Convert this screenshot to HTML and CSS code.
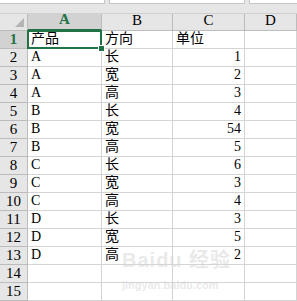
FILE: index.html
```html
<!DOCTYPE html>
<html lang="zh-CN">
<head>
    <meta charset="utf-8">
    <title>Sheet1</title>
    <link rel="stylesheet" href="styles.css">
</head>
<body>
    <div class="toolbar">
        <div class="box box-name"></div>
        <div class="box box-formula"></div>
        <div class="box box-end"></div>
    </div>
    <div class="sheet">
        <div class="corner"><span class="tri"></span></div>
        <div class="colhead active">A</div>
        <div class="colhead">B</div>
        <div class="colhead">C</div>
        <div class="colhead">D</div>

        <div class="rowhead active">1</div>
        <div class="cell selected">产品<span class="handle"></span></div>
        <div class="cell">方向</div>
        <div class="cell">单位</div>
        <div class="cell"></div>

        <div class="rowhead">2</div><div class="cell">A</div><div class="cell">长</div><div class="cell num">1</div><div class="cell"></div>
        <div class="rowhead">3</div><div class="cell">A</div><div class="cell">宽</div><div class="cell num">2</div><div class="cell"></div>
        <div class="rowhead">4</div><div class="cell">A</div><div class="cell">高</div><div class="cell num">3</div><div class="cell"></div>
        <div class="rowhead">5</div><div class="cell">B</div><div class="cell">长</div><div class="cell num">4</div><div class="cell"></div>
        <div class="rowhead">6</div><div class="cell">B</div><div class="cell">宽</div><div class="cell num">54</div><div class="cell"></div>
        <div class="rowhead">7</div><div class="cell">B</div><div class="cell">高</div><div class="cell num">5</div><div class="cell"></div>
        <div class="rowhead">8</div><div class="cell">C</div><div class="cell">长</div><div class="cell num">6</div><div class="cell"></div>
        <div class="rowhead">9</div><div class="cell">C</div><div class="cell">宽</div><div class="cell num">3</div><div class="cell"></div>
        <div class="rowhead">10</div><div class="cell">C</div><div class="cell">高</div><div class="cell num">4</div><div class="cell"></div>
        <div class="rowhead">11</div><div class="cell">D</div><div class="cell">长</div><div class="cell num">3</div><div class="cell"></div>
        <div class="rowhead">12</div><div class="cell">D</div><div class="cell">宽</div><div class="cell num">5</div><div class="cell"></div>
        <div class="rowhead">13</div><div class="cell">D</div><div class="cell">高</div><div class="cell num">2</div><div class="cell"></div>
        <div class="rowhead">14</div><div class="cell"></div><div class="cell"></div><div class="cell"></div><div class="cell"></div>
        <div class="rowhead">15</div><div class="cell"></div><div class="cell"></div><div class="cell"></div><div class="cell"></div>
    </div>
    <div class="watermark">
        <div class="wm-logo">Bai<span class="paw">du</span> 经验</div>
        <div class="wm-url">jingyan.baidu.com</div>
    </div>
</body>
</html>
```

FILE: styles.css
```css
body {
    margin: 0;
    width: 297px;
    height: 301px;
    overflow: hidden;
    background-color: #fff;
    font-family: "Liberation Serif", "Noto Sans CJK SC", serif;
    font-size: 14px;
    color: #000;
    position: relative;
}
.toolbar {
    height: 14px;
    box-sizing: border-box;
    background-color: #e6e6e6;
    border-bottom: 1px solid #d0d0d0;
    display: flex;
    gap: 4px;
}
.box {
    height: 3px;
    background-color: #fff;
    border: 1px solid #c6c6c6;
    border-top: none;
}
.box-name {
    width: 104px;
    border-left: none;
}
.box-formula {
    width: 134px;
}
.box-end {
    flex: 1;
    border-right: none;
}
.sheet {
    display: grid;
    grid-template-columns: 28px 74px 71px 72px 1fr;
    grid-template-rows: 17px repeat(15, 18px);
}
.sheet > div {
    box-sizing: border-box;
    border-right: 1px solid #d4d4d4;
    border-bottom: 1px solid #d4d4d4;
    line-height: 1;
    white-space: nowrap;
}
.corner {
    background-color: #e6e6e6;
    position: relative;
}
.sheet > .corner,
.sheet > .colhead,
.sheet > .rowhead {
    border-color: #bcbcbc;
}
.tri {
    position: absolute;
    right: 3px;
    bottom: 3px;
    width: 0;
    height: 0;
    border-left: 9px solid transparent;
    border-bottom: 9px solid #b4b4b4;
}
.colhead {
    background-color: #e6e6e6;
    display: flex;
    align-items: flex-end;
    justify-content: center;
    padding-bottom: 2px;
    font-size: 15px;
}
.rowhead {
    background-color: #e6e6e6;
    display: flex;
    align-items: flex-end;
    justify-content: center;
    padding-bottom: 1px;
    font-size: 15px;
}
.colhead.active,
.rowhead.active {
    background-color: #d2d2d2;
    color: #217346;
    font-weight: bold;
}
.sheet > .colhead.active {
    border-bottom: 2px solid #217346;
}
.cell {
    display: flex;
    align-items: flex-end;
    padding: 0 3px 2px 3px;
}
.cell.num {
    justify-content: flex-end;
}
.cell.selected {
    position: relative;
}
.cell.selected::after {
    content: "";
    position: absolute;
    left: -1px;
    top: -1px;
    right: -1px;
    bottom: -1px;
    border: 2px solid #217346;
}
.handle {
    position: absolute;
    right: -4px;
    bottom: -4px;
    width: 5px;
    height: 5px;
    background-color: #217346;
    border: 1px solid #fff;
    z-index: 2;
}
.watermark {
    position: absolute;
    left: 122px;
    top: 244px;
    color: rgba(215, 215, 215, 0.55);
    font-family: "Liberation Sans", "Noto Sans CJK SC", sans-serif;
    pointer-events: none;
}
.wm-logo {
    font-size: 20px;
    font-weight: bold;
    letter-spacing: 1px;
}
.wm-url {
    font-size: 11px;
    font-weight: bold;
    margin-top: 6px;
}
```
